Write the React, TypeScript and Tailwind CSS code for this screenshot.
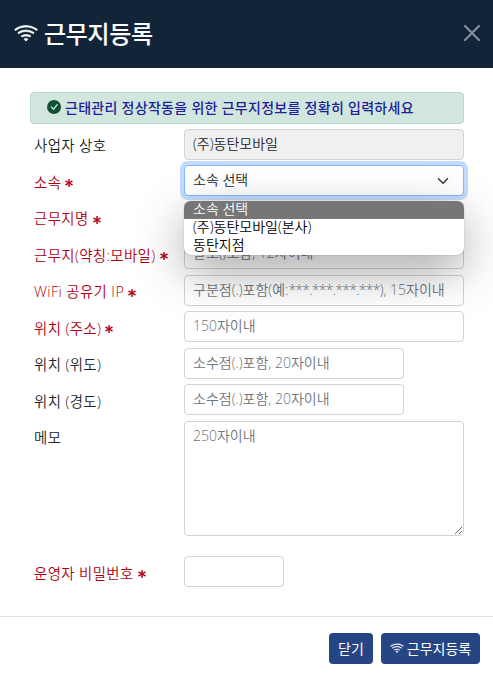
import { useState, type ReactNode } from "react";
import clsx from "clsx";
import { BsAsterisk, BsCheckCircleFill, BsWifi } from "react-icons/bs";

const FIELD =
  "block h-[31px] shrink-0 rounded border border-[#ced4da] px-2 pt-[3px] pb-[5px] text-[14px] leading-[21px] font-[350] text-[#212529] outline-none placeholder:text-[#6c757d] placeholder:opacity-100";

const OPTIONS = ["소속 선택", "(주)동탄모바일(본사)", "동탄지점"];

type RowProps = {
  label: string;
  required?: boolean;
  className?: string;
  children: ReactNode;
};

function Row({ label, required, className, children }: RowProps) {
  return (
    <div className={clsx("flex items-start", className)}>
      <label
        className={clsx(
          "flex h-[31px] w-[154px] shrink-0 items-center pt-[4px] pl-1 text-[14.4px] font-[350] tracking-[0.4px] whitespace-nowrap",
          required ? "text-[#b00010]" : "text-[#212529]"
        )}
      >
        {label}
        {required && <BsAsterisk className="mt-[1px] ml-[4px] size-[8px]" strokeWidth={1} />}
      </label>
      {children}
    </div>
  );
}

function DepartmentSelect() {
  const [selected, setSelected] = useState(0);

  return (
    <div className="relative w-[280px] shrink-0 font-[350]">
      <button
        type="button"
        className="flex h-[31px] w-full items-center justify-between rounded border border-[#86b7fe] bg-white pr-[14px] pb-[2px] pl-2 text-[14px] leading-[21px] text-[#212529] shadow-[0_0_0_4px_#c2dbfe]"
      >
        {OPTIONS[selected]}
        <svg viewBox="0 0 16 16" className="mt-[2px] h-3 w-3" fill="none" stroke="#343a40" strokeWidth="2" strokeLinecap="round" strokeLinejoin="round">
          <path d="m2 5 6 6 6-6" />
        </svg>
      </button>
      <ul className="absolute top-[36px] left-0 z-10 w-full rounded-[7px] bg-white shadow-[0_0_1px_#00000080,0_16px_48px_#00000059]">
        {OPTIONS.map((option, i) => (
          <li
            key={option}
            onClick={() => setSelected(i)}
            className={clsx(
              "flex h-[18px] items-center pb-[3px] pl-[9px] text-[14px] leading-[14px] first:rounded-t-[7px] last:rounded-b-[7px]",
              i === selected ? "bg-[#767676] text-white" : "text-black"
            )}
          >
            {option}
          </li>
        ))}
      </ul>
    </div>
  );
}

/** IP field; its hint is a separate element so the masked octets can be set tighter. */
function RouterIpInput() {
  const [value, setValue] = useState("");

  return (
    <div className="relative shrink-0">
      <input
        aria-label="WiFi 공유기 IP"
        className={clsx(FIELD, "w-[280px]")}
        value={value}
        onChange={(e) => setValue(e.target.value)}
      />
      {!value && (
        <span className="pointer-events-none absolute top-[4px] left-[9px] text-[14px] leading-[21px] font-[350] whitespace-nowrap text-[#6c757d]">
          구분점(.)포함(예:<span className="tracking-[-0.75px]">***.***.***.***</span>), 15자이내
        </span>
      )}
    </div>
  );
}

export default function App() {
  return (
    <div className="flex h-[677px] w-[493px] flex-col overflow-hidden bg-white font-['Open_Sans','Noto_Sans_CJK_KR',sans-serif]">
      <header className="flex h-[68px] shrink-0 items-center justify-between bg-[#122438] pr-[13px] pb-[2px] pl-[14px] text-white">
        <h5 className="flex items-center text-[24px] font-medium tracking-[-0.3px] [-webkit-text-stroke:0.1px_white]">
          <BsWifi className="mr-[6px] size-6" stroke="currentColor" strokeWidth={0.4} />
          <span className="pt-[1px]">근무지등록</span>
        </h5>
        <button type="button" aria-label="닫기" className="opacity-50">
          <svg viewBox="0 0 16 16" className="size-4" fill="white">
            <path d="M.293.293a1 1 0 0 1 1.414 0L8 6.586 14.293.293a1 1 0 1 1 1.414 1.414L9.414 8l6.293 6.293a1 1 0 0 1-1.414 1.414L8 9.414l-6.293 6.293a1 1 0 0 1-1.414-1.414L6.586 8 .293 1.707a1 1 0 0 1 0-1.414z" />
          </svg>
        </button>
      </header>

      <main className="h-[548px] shrink-0 pt-6 pl-[30px]">
        <div className="flex h-8 w-[434px] items-center rounded border border-[#badbcc] bg-[#d1e7dd] pb-[2px] pl-4 text-[14px] font-medium tracking-[0.29px] text-[#20209b]">
          <BsCheckCircleFill className="mr-1 size-[14px] text-[#0f5132]" />
          근태관리 정상작동을 위한 근무지정보를 정확히 입력하세요
        </div>

        <form className="mt-[4.8px] flex flex-col gap-[5.5px]">
          <Row label="사업자 상호">
            <input className={clsx(FIELD, "w-[280px] bg-[#f0f0f0]")} defaultValue="(주)동탄모바일" readOnly />
          </Row>
          <Row label="소속" required>
            <DepartmentSelect />
          </Row>
          <Row label="근무지명" required>
            <input className={clsx(FIELD, "w-[280px]")} />
          </Row>
          <Row label="근무지(약칭:모바일)" required>
            <input className={clsx(FIELD, "w-[280px]")} placeholder="괄호()포함, 12자이내" />
          </Row>
          <Row label="WiFi 공유기 IP" required>
            <RouterIpInput />
          </Row>
          <Row label="위치 (주소)" required>
            <input className={clsx(FIELD, "w-[280px]")} placeholder="150자이내" />
          </Row>
          <Row label="위치 (위도)">
            <input className={clsx(FIELD, "w-[220px]")} placeholder="소수점(.)포함, 20자이내" />
          </Row>
          <Row label="위치 (경도)">
            <input className={clsx(FIELD, "w-[220px]")} placeholder="소수점(.)포함, 20자이내" />
          </Row>
          <Row label="메모">
            <textarea className={clsx(FIELD, "h-[115px] w-[280px] resize")} placeholder="250자이내" />
          </Row>
          <Row label="운영자 비밀번호" required className="mt-[15px]">
            <input type="password" className={clsx(FIELD, "w-[100px]")} />
          </Row>
        </form>
      </main>

      <footer className="flex grow items-start justify-end gap-2 border-t border-[#dee2e6] pt-4 pr-[13px] text-[14px] text-white">
        <button type="button" className="flex h-[31px] w-11 items-center justify-center rounded-[4px] bg-[#264584] pb-[1px]">
          닫기
        </button>
        <button type="button" className="flex h-[31px] w-[99px] items-center justify-center rounded-[4px] bg-[#264584] pb-[1px]">
          <BsWifi className="mr-[3px] size-[14px]" stroke="currentColor" strokeWidth={0.3} />
          근무지등록
        </button>
      </footer>
    </div>
  );
}
